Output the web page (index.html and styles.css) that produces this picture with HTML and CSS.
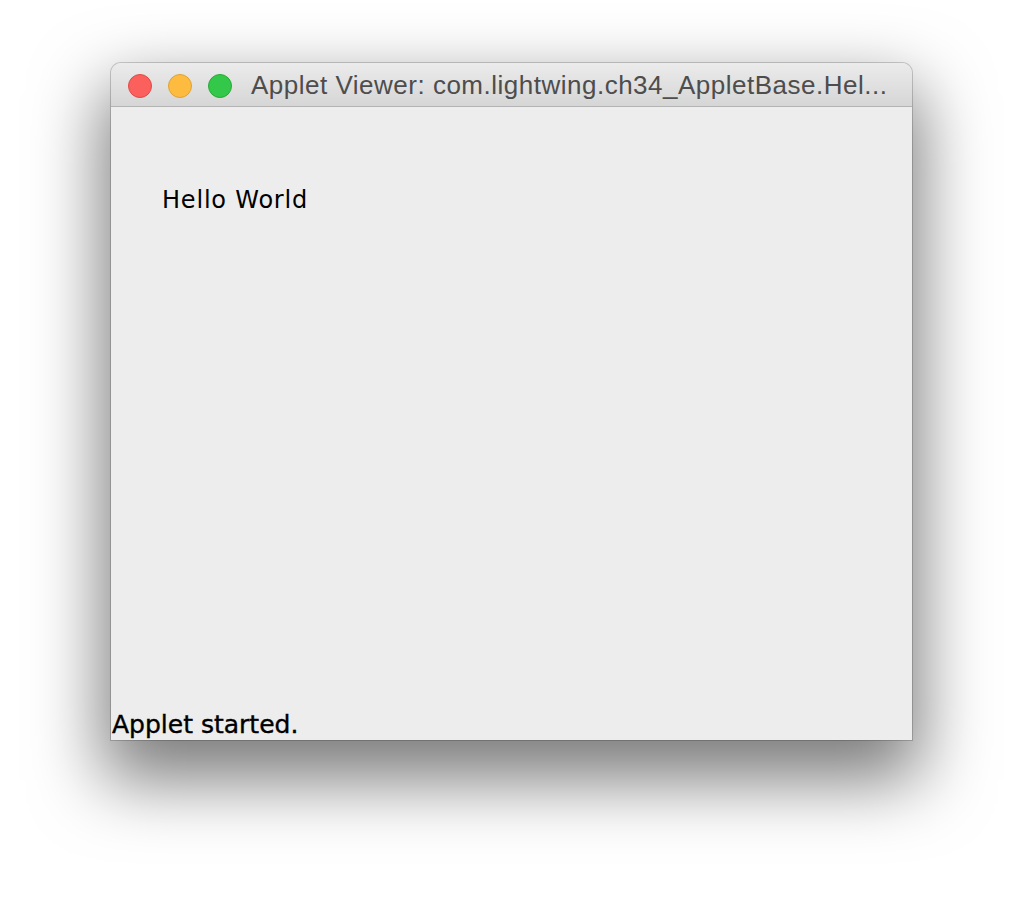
FILE: index.html
```html
<!DOCTYPE html>
<html>
<head>
<meta charset="utf-8">
<link rel="stylesheet" href="styles.css">
</head>
<body>
<div class="window">
  <div class="titlebar">
    <div class="lights">
      <span class="light red"></span>
      <span class="light yellow"></span>
      <span class="light green"></span>
    </div>
    <div class="title">Applet Viewer: com.lightwing.ch34_AppletBase.Hel...</div>
  </div>
  <div class="content">
    <div class="hello">Hello World</div>
    <div class="status">Applet started.</div>
  </div>
</div>
</body>
</html>
```
FILE: styles.css
```css
html, body {
  margin: 0;
  padding: 0;
  background: #ffffff;
}
body {
  padding: 63px 0 0 111px;
  height: 900px;
  box-sizing: border-box;
  overflow: hidden;
}
.window {
  width: 801px;
  height: 677px;
  display: flex;
  flex-direction: column;
  border-radius: 10px 10px 0 0;
  background: #ededed;
  box-shadow: 0 0 0 1px rgba(0,0,0,0.18), 0 32px 70px 8px rgba(0,0,0,0.52);
}
.titlebar {
  height: 44px;
  flex: none;
  box-sizing: border-box;
  display: flex;
  align-items: center;
  border-radius: 10px 10px 0 0;
  background: linear-gradient(#ebebeb, #d6d6d6);
  border-bottom: 1px solid #b4b4b4;
  padding: 2px 0 0 17px;
}
.lights {
  display: flex;
  gap: 16px;
}
.light {
  width: 24px;
  height: 24px;
  border-radius: 50%;
  box-sizing: border-box;
  display: block;
}
.red { background: #fc605c; border: 1px solid #de4a46; }
.yellow { background: #fdbc40; border: 1px solid #dea236; }
.green { background: #34c84a; border: 1px solid #27aa35; }
.title {
  margin-left: 19px;
  font-family: "Liberation Sans", Arial, sans-serif;
  font-size: 26px;
  letter-spacing: 0.5px;
  color: #4d4d4d;
  white-space: nowrap;
}
.content {
  flex: 1;
  display: flex;
  flex-direction: column;
  justify-content: space-between;
  font-family: "DejaVu Sans", sans-serif;
  color: #000;
}
.hello {
  font-size: 24px;
  line-height: 30px;
  padding: 78px 0 0 51px;
  letter-spacing: 0.8px;
}
.status {
  font-size: 25px;
  line-height: 30px;
  letter-spacing: 0;
  padding-left: 1px;
  -webkit-text-stroke: 0.4px #000;
}
```
